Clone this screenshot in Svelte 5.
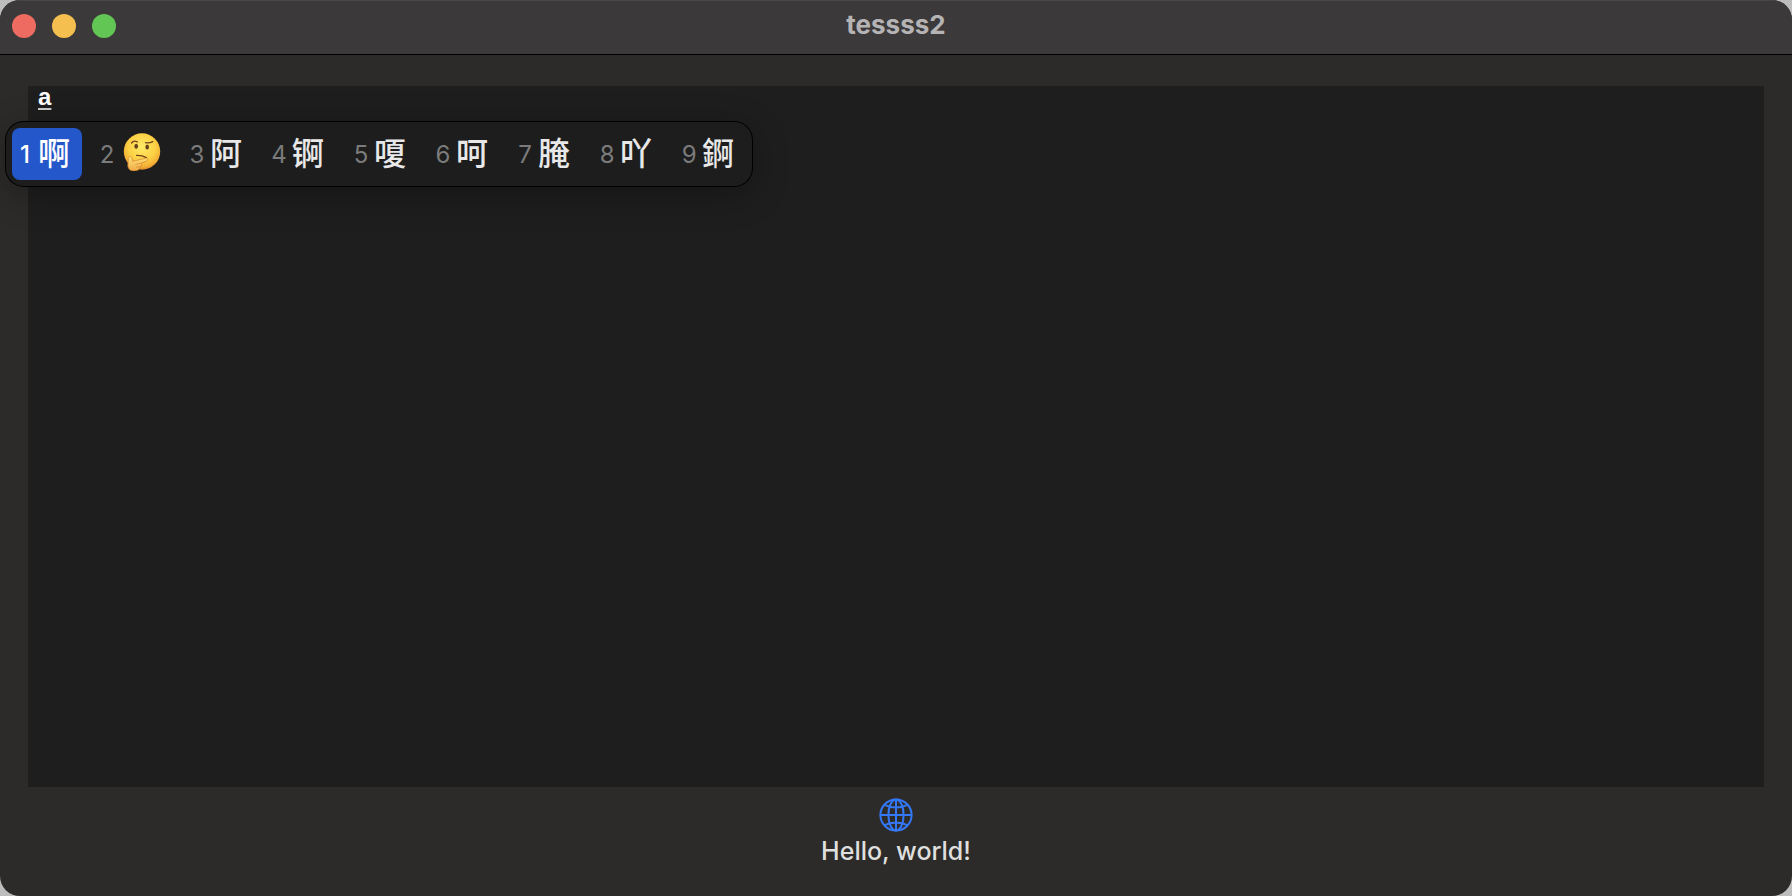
<script lang="ts">
	/**
	 * Editor window with an inline input method
	 *
	 * - Title bar with the three window buttons
	 * - Text area holding the marked (underlined) composition
	 * - Candidate panel floating under the caret
	 */

	type Candidate = { label: number; text: string; emoji?: boolean };

	const candidates: Candidate[] = [
		{ label: 1, text: '啊' },
		{ label: 2, text: 'thinking face', emoji: true },
		{ label: 3, text: '阿' },
		{ label: 4, text: '锕' },
		{ label: 5, text: '嗄' },
		{ label: 6, text: '呵' },
		{ label: 7, text: '腌' },
		{ label: 8, text: '吖' },
		{ label: 9, text: '錒' }
	];

	let composition = $state('a');
	let selected = $state(1);
</script>

<div class="window">
	<header class="title-bar">
		<div class="window-buttons">
			<button type="button" class="close" aria-label="Close"></button>
			<button type="button" class="minimize" aria-label="Minimize"></button>
			<button type="button" class="zoom" aria-label="Zoom"></button>
		</div>
		<h1>tessss2</h1>
	</header>

	<main>
		<div class="editor">
			<textarea aria-label="Text" spellcheck="false" bind:value={composition}></textarea>

			<!-- Candidate panel -->
			<div class="candidates" role="listbox" aria-label="Candidates">
				{#each candidates as candidate (candidate.label)}
					<button
						type="button"
						class="candidate"
						class:selected={candidate.label === selected}
						role="option"
						aria-selected={candidate.label === selected}
						onclick={() => (selected = candidate.label)}
					>
						<span class="label">{candidate.label}</span>
						{#if candidate.emoji}
							<svg class="emoji" viewBox="0 0 38 38" role="img" aria-label={candidate.text}>
								<defs>
									<radialGradient id="face" cx="0.5" cy="0.38" r="0.62">
										<stop offset="0" stop-color="#ffea67" />
										<stop offset="0.6" stop-color="#fdd044" />
										<stop offset="0.88" stop-color="#f3ae35" />
										<stop offset="1" stop-color="#dc872a" />
									</radialGradient>
									<linearGradient id="hand" x1="0" y1="0" x2="0" y2="1">
										<stop offset="0" stop-color="#ffe27a" />
										<stop offset="1" stop-color="#efaa45" />
									</linearGradient>
								</defs>
								<circle cx="19" cy="18.5" r="18.2" fill="url(#face)" />
								<g fill="none" stroke="#73421a" stroke-linecap="round">
									<path d="M8.5 10Q11 7 14.5 9" stroke-width="1.3" />
									<path d="M22.5 9.6Q26 10.4 29.8 8.6" stroke-width="1.3" />
									<path d="M13.5 22.4Q19 22.2 23.4 24.6" stroke-width="1.2" />
								</g>
								<ellipse cx="13.2" cy="13.2" rx="1.8" ry="2.5" fill="#65401d" />
								<ellipse cx="24.2" cy="14" rx="1.8" ry="2.5" fill="#65401d" />
								<path
									d="M5.3 25.5C5.4 23 8.7 22.8 9.1 25.4L9.6 28.2C13 27.4 18 26.3 22.7 25.2C25.3 24.7 25.6 27.5 23.2 28.4L17.6 30.3C19.2 30.8 19 33 17.4 33.6C16.8 36.5 14.5 38 11.2 38C6.8 38 4.8 35.4 4.9 31.8Z"
									fill="url(#hand)"
									stroke="#d88930"
									stroke-width="0.8"
								/>
								<path d="M12.5 31.4L17.4 30.4M13 34.2L17.2 33.5" fill="none" stroke="#d88930" stroke-width="0.7" />
							</svg>
						{:else}
							<span class="text" lang="zh-CN">{candidate.text}</span>
						{/if}
					</button>
				{/each}
			</div>
		</div>

		<footer>
			<svg class="globe" viewBox="0 0 34 34" aria-hidden="true">
				<circle cx="17" cy="17" r="15.6" />
				<ellipse cx="17" cy="17" rx="7.6" ry="15.6" />
				<path d="M17 1.4V32.6M1.4 17H32.6M5.4 6.8Q17 12.4 28.6 6.8M5.4 27.2Q17 21.6 28.6 27.2" />
			</svg>
			<p>Hello, world!</p>
		</footer>
	</main>
</div>

<style>
	:global(body) {
		margin: 0;
		background: #bdbdbd;
	}

	.window {
		box-sizing: border-box;
		display: flex;
		flex-direction: column;
		min-height: 100vh;
		overflow: hidden;
		border-radius: 20px;
		background: #2c2b29;
		font-family: Inter, 'Noto Sans CJK SC', sans-serif;
	}

	.title-bar {
		display: grid;
		grid-template-columns: 1fr auto 1fr;
		align-items: center;
		height: 52px;
		padding: 0 12px 2px;
		border-bottom: 1px solid #000;
		background: #3b393a;
		box-shadow: inset 0 1px #484647;
	}

	.window-buttons {
		display: flex;
		gap: 16px;
	}

	.window-buttons button {
		width: 24px;
		height: 24px;
		padding: 0;
		border: none;
		border-radius: 50%;
	}

	.window-buttons .close {
		background: #ed6b60;
	}

	.window-buttons .minimize {
		background: #f5bf4f;
	}

	.window-buttons .zoom {
		background: #62c655;
	}

	h1 {
		margin: 0;
		padding-bottom: 2px;
		font-size: 26px;
		font-weight: 700;
		line-height: 32px;
		color: #b5b3b4;
	}

	main {
		display: flex;
		flex: 1;
		flex-direction: column;
		padding: 31px 28px 29px;
	}

	.editor {
		position: relative;
		display: flex;
		flex: 1;
	}

	textarea {
		flex: 1;
		padding: 0 10px;
		border: none;
		outline: none;
		resize: none;
		background: #1e1e1e;
		color: #fff;
		font-family: 'Liberation Sans', sans-serif;
		font-size: 24px;
		font-weight: 700;
		line-height: 22px;
		text-decoration: underline 2px #ccc;
		text-underline-offset: 3px;
	}

	/* Hangs below the first line, slightly left of the text */
	.candidates {
		position: absolute;
		top: 36px;
		left: -22px;
		display: flex;
		gap: 12px;
		padding: 6px;
		border-radius: 18px;
		background: #1d1d1d;
		box-shadow:
			0 0 0 1px #000,
			0 8px 36px rgba(0, 0, 0, 0.3);
	}

	.candidate {
		display: flex;
		align-items: center;
		gap: 5px;
		height: 52px;
		padding: 0 12px 0 5px;
		border: none;
		border-radius: 8px;
		background: none;
		color: #e8e8e8;
		font-family: inherit;
	}

	.candidate.selected {
		background: #2458ca;
		color: #fff;
	}

	.label {
		width: 16px;
		padding-top: 2px;
		font-size: 24px;
		line-height: 32px;
		color: #7b7b7b;
	}

	.selected .label {
		color: #fff;
		font-weight: 500;
	}

	.text {
		padding-bottom: 6px;
		font-family: 'Noto Sans CJK SC', sans-serif;
		font-size: 32px;
		font-weight: 500;
		line-height: 40px;
	}

	.emoji {
		width: 38px;
		height: 38px;
		margin: 0 -1px 4px 3px;
	}

	footer {
		display: flex;
		flex-direction: column;
		align-items: center;
		gap: 3px;
		padding-top: 11px;
	}

	.globe {
		width: 34px;
		height: 34px;
		fill: none;
		stroke: #3478f6;
		stroke-width: 2;
	}

	footer p {
		margin: 0;
		font-size: 25px;
		font-weight: 500;
		line-height: 32px;
		color: #dfdfde;
	}
</style>
